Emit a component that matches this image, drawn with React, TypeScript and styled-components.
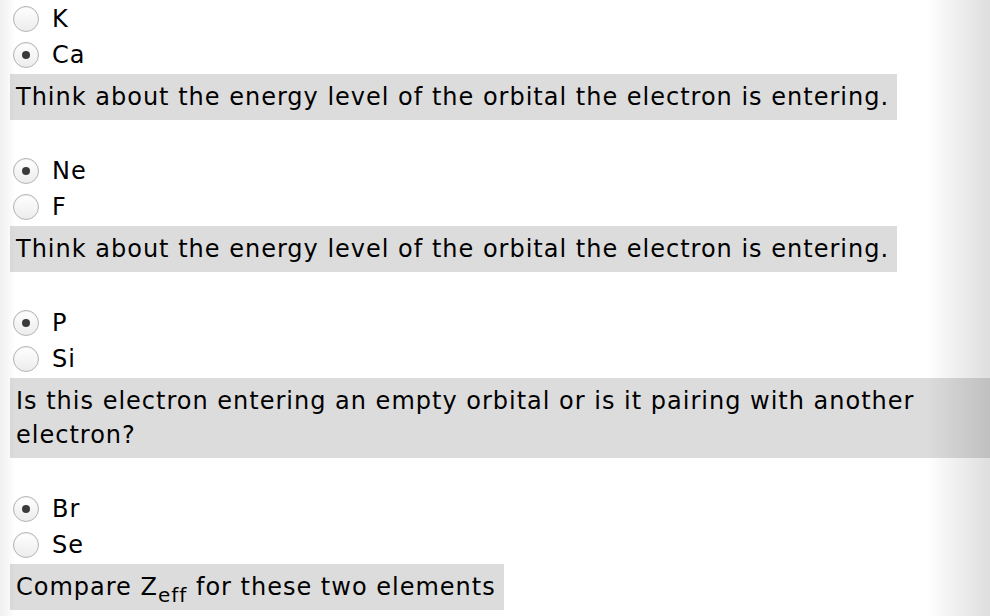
import React from "react";
import styled, { createGlobalStyle } from "styled-components";

const Global = createGlobalStyle`
  html, body { margin: 0; padding: 0; background: #fff; }
  body { font-family: "DejaVu Sans", Verdana, sans-serif; color: #000; overflow: hidden; }
`;

const Page = styled.div`
  position: relative;
  width: 990px;
  height: 616px;
  overflow: hidden;
  background: #fff;
`;

const Content = styled.div`
  display: flex;
  flex-direction: column;
  gap: 33px;
  padding: 1px 0 0 10px;
  width: 1000px;
`;

const Group = styled.div`
  display: flex;
  flex-direction: column;
  align-items: flex-start;
`;

const Row = styled.label`
  display: flex;
  align-items: center;
  height: 36px;
  gap: 13px;
  padding-left: 3px;
  font-size: 24px;
  letter-spacing: 1px;
`;

const Radio = styled.span<{ $checked?: boolean }>`
  width: 24px;
  height: 24px;
  border-radius: 50%;
  border: 1px solid #b4b4b4;
  background: linear-gradient(#ffffff, #ececec);
  box-shadow: inset 0 1px 1px rgba(0, 0, 0, 0.06);
  display: flex;
  align-items: center;
  justify-content: center;
  flex: none;
  &::after {
    content: "";
    width: 8px;
    height: 8px;
    border-radius: 50%;
    background: #3a3a3a;
    display: ${(p) => (p.$checked ? "block" : "none")};
  }
`;

const Hint = styled.div`
  display: inline-block;
  margin-top: 1px;
  background: #dcdcdc;
  font-size: 24px;
  letter-spacing: 1px;
  line-height: 34px;
  padding: 6px 8px 6px 6px;
  max-width: 980px;
  box-sizing: border-box;
`;

const Sub = styled.sub`
  font-size: 20px;
  vertical-align: -7px;
  line-height: 0;
  letter-spacing: 1px;
`;

const LeftShade = styled.div`
  position: absolute;
  left: 0;
  top: 0;
  bottom: 0;
  width: 16px;
  background: linear-gradient(to right, rgba(0, 0, 0, 0.06), rgba(0, 0, 0, 0));
  pointer-events: none;
`;

const RightShade = styled.div`
  position: absolute;
  right: 0;
  top: 0;
  bottom: 0;
  width: 64px;
  background: linear-gradient(to right, rgba(0, 0, 0, 0), rgba(0, 0, 0, 0.13));
  pointer-events: none;
`;

type Q = { options: { label: string; checked?: boolean }[]; hint: React.ReactNode };

const questions: Q[] = [
  {
    options: [{ label: "K" }, { label: "Ca", checked: true }],
    hint: "Think about the energy level of the orbital the electron is entering.",
  },
  {
    options: [{ label: "Ne", checked: true }, { label: "F" }],
    hint: "Think about the energy level of the orbital the electron is entering.",
  },
  {
    options: [{ label: "P", checked: true }, { label: "Si" }],
    hint: "Is this electron entering an empty orbital or is it pairing with another electron?",
  },
  {
    options: [{ label: "Br", checked: true }, { label: "Se" }],
    hint: (
      <>
        Compare Z<Sub>eff</Sub> for these two elements
      </>
    ),
  },
];

export default function App() {
  return (
    <Page>
      <Global />
      <Content>
        {questions.map((q, i) => (
          <Group key={i}>
            {q.options.map((o) => (
              <Row key={o.label}>
                <Radio $checked={o.checked} />
                {o.label}
              </Row>
            ))}
            <Hint>{q.hint}</Hint>
          </Group>
        ))}
      </Content>
      <LeftShade />
      <RightShade />
    </Page>
  );
}
